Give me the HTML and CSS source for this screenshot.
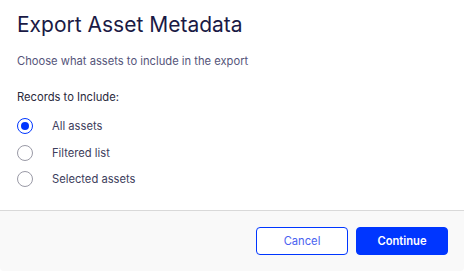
FILE: index.html
```html
<!DOCTYPE html>
<html lang="en">
<head>
<meta charset="utf-8">
<link rel="stylesheet" href="styles.css">
</head>
<body>
<div class="dialog">
  <div class="content">
    <h1 class="title">Export Asset Metadata</h1>
    <p class="subtitle">Choose what assets to include in the export</p>
    <div class="group-label">Records to Include:</div>
    <div class="options">
      <label class="option"><span class="radio checked"></span><span class="opt-text">All assets</span></label>
      <label class="option"><span class="radio"></span><span class="opt-text">Filtered list</span></label>
      <label class="option"><span class="radio"></span><span class="opt-text">Selected assets</span></label>
    </div>
  </div>
  <div class="footer">
    <button class="btn btn-secondary">Cancel</button>
    <button class="btn btn-primary">Continue</button>
  </div>
</div>
</body>
</html>
```
FILE: styles.css
```css
* { box-sizing: border-box; }
html, body { margin: 0; padding: 0; background: #ffffff; }
body { font-family: Inter, "Noto Sans", sans-serif; width: 464px; height: 271px; overflow: hidden; }
.dialog { display: flex; flex-direction: column; height: 271px; background: #fff; }
.content { flex: 1; padding: 12px 16px 0 17px; }
.title { margin: 0; font-size: 21px; font-weight: 400; line-height: 26px; color: #1a1a45; }
.subtitle { margin: 16px 0 0; font-size: 11.2px; line-height: 14px; color: #55557a; }
.group-label { margin-top: 22px; font-size: 11.2px; line-height: 14px; color: #2a2a3c; }
.options { margin-top: 14px; display: flex; flex-direction: column; gap: 10.5px; }
.option { display: flex; align-items: center; height: 16px; }
.radio { width: 16px; height: 16px; border-radius: 50%; border: 1px solid #9a9aa6; background: #fff; position: relative; flex: none; }
.radio.checked { border: 1.5px solid #0036ff; }
.radio.checked::after { content: ""; position: absolute; left: 50%; top: 50%; width: 8px; height: 8px; margin: -4px 0 0 -4px; border-radius: 50%; background: #0036ff; }
.opt-text { margin-left: 19px; font-size: 11.2px; color: #3d3d5c; }
.footer { height: 61px; border-top: 1px solid #d9d9d9; background: #f9f9f9; display: flex; justify-content: flex-end; align-items: flex-start; gap: 8px; padding: 16px 16px 0 0; border-radius: 0 0 4px 4px; }
.btn { width: 92px; height: 28px; border-radius: 4px; font-family: Inter, "Noto Sans", sans-serif; font-size: 11.2px; cursor: pointer; }
.btn-secondary { background: #fff; border: 1px solid #0036ff; color: #4a62f0; }
.btn-primary { background: #0036ff; border: 1px solid #0036ff; color: #fff; font-weight: 600; }
```
